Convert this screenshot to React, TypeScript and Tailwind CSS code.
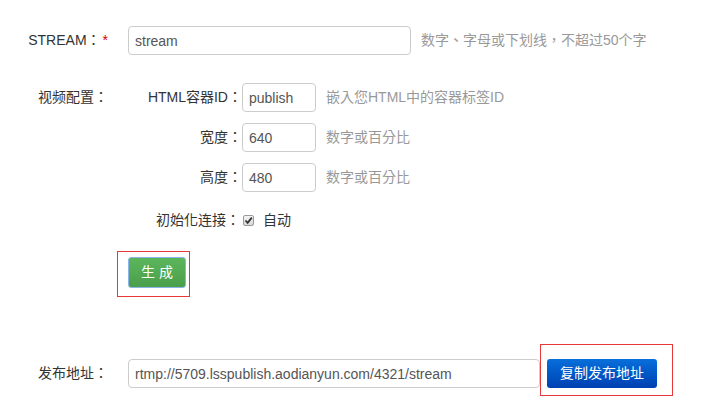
const font = { fontFamily: '"Liberation Sans", "Noto Sans CJK TC", sans-serif' };

const sizes = [
  { label: 'HTML容器ID：', value: 'publish', hint: '嵌入您HTML中的容器标签ID' },
  { label: '宽度：', value: '640', hint: '数字或百分比' },
  { label: '高度：', value: '480', hint: '数字或百分比' },
];

function TextBox({ value, className }: { value: string; className: string }) {
  return (
    <input
      readOnly
      value={value}
      className={`h-[29px] border border-[#cccccc] rounded-[4px] px-[6px] text-[14px] text-[#555] bg-white outline-none ${className}`}
      style={font}
    />
  );
}

function Checkmark() {
  return (
    <span className="w-[11px] h-[11px] border border-[#9a9a9a] rounded-[2px] bg-gradient-to-b from-[#f4f4f4] to-[#d8d8d8] flex items-center justify-center">
      <svg width="9" height="9" viewBox="0 0 9 9">
        <path d="M1.5 4.5 L3.6 6.8 L7.8 1.6" stroke="#333" strokeWidth="1.8" fill="none" />
      </svg>
    </span>
  );
}

export default function App() {
  return (
    <div className="w-[724px] h-[406px] bg-white text-[14px] text-[#333] pt-[26px]" style={font}>
      {/* stream */}
      <div className="flex items-center h-[29px]">
        <div className="w-[128px] pr-[20px] text-right">
          STREAM：<span className="text-[#d00] ml-[2px]">*</span>
        </div>
        <TextBox value="stream" className="w-[283px]" />
        <span className="ml-[10px] text-[#999]">数字、字母或下划线，不超过50个字</span>
      </div>

      {/* video config */}
      <div className="flex mt-[28px]">
        <div className="w-[128px] h-[29px] pr-[20px] flex items-center justify-end">视频配置：</div>
        <div className="flex flex-col gap-[11px]">
          {sizes.map((s) => (
            <div key={s.label} className="flex items-center h-[29px]">
              <div className="w-[114px] text-right">{s.label}</div>
              <TextBox value={s.value} className="w-[74px]" />
              <span className="ml-[10px] text-[#999]">{s.hint}</span>
            </div>
          ))}
          <div className="flex items-center h-[29px] mt-[3px]">
            <div className="w-[112px] text-right">初始化连接：</div>
            <span className="ml-[3px]"><Checkmark /></span>
            <span className="ml-[9px]">自动</span>
          </div>
        </div>
      </div>

      {/* generate */}
      <div className="ml-[117px] mt-[16px] w-[73px] h-[46px] border border-[#e8393a] pl-[10px] pt-[5px]">
        <button className="w-[58px] h-[31px] rounded-[3px] border border-[#8db4ea] bg-gradient-to-b from-[#5cb65c] to-[#4a9f4a] text-white text-[14px]">
          生 成
        </button>
      </div>

      {/* publish url */}
      <div className="flex items-start mt-[47px]">
        <div className="w-[128px] h-[29px] mt-[15px] pr-[20px] flex items-center justify-end">发布地址：</div>
        <TextBox value="rtmp://5709.lsspublish.aodianyun.com/4321/stream" className="w-[412px] mt-[15px]" />
        <div className="w-[133px] h-[52px] border border-[#e8393a] pl-[6px] pt-[14px]">
          <button className="w-[110px] h-[29px] rounded-[3px] bg-gradient-to-b from-[#0a6fdb] to-[#0040b2] text-white text-[14px]">
            复制发布地址
          </button>
        </div>
      </div>
    </div>
  );
}
